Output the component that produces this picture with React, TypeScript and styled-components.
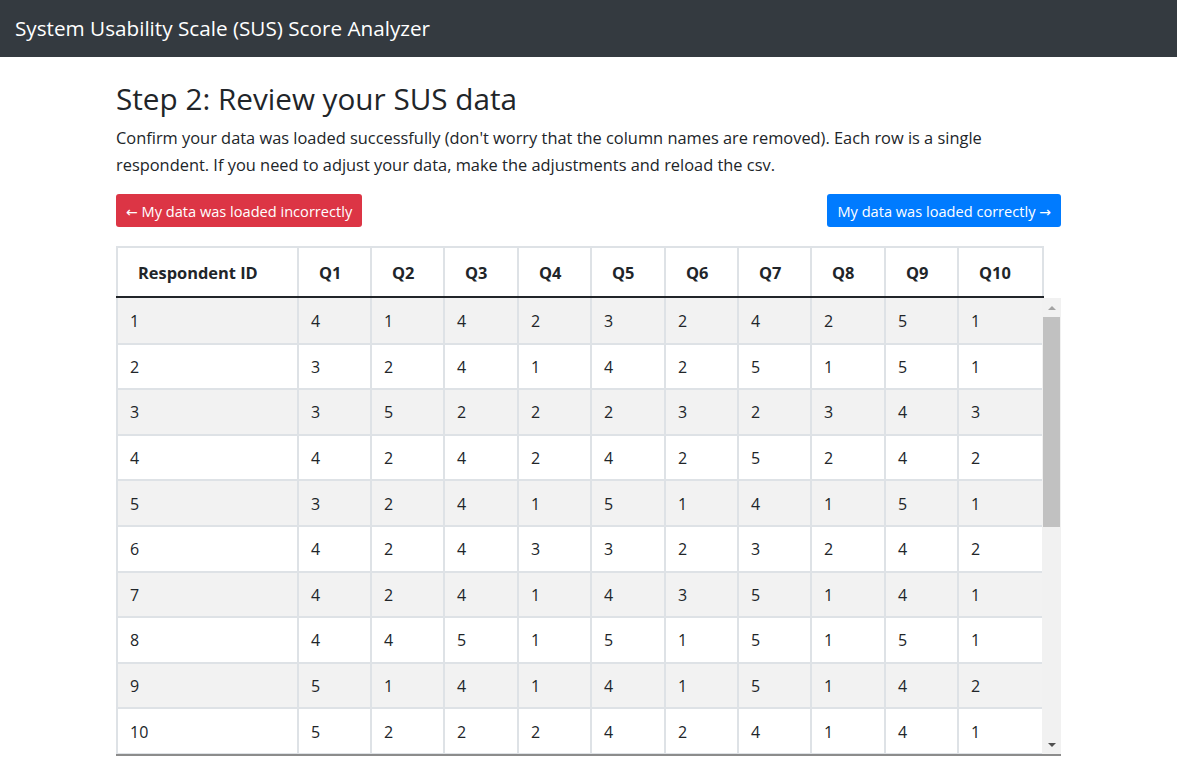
import React from "react";
import styled, { createGlobalStyle } from "styled-components";

const GlobalStyle = createGlobalStyle`
  html, body { margin: 0; padding: 0; background: #fff; }
  body {
    font-family: "Open Sans", "Noto Sans", "Liberation Sans", sans-serif;
    color: #212529;
    -webkit-font-smoothing: antialiased;
  }
  * { box-sizing: border-box; }
`;

const NavBar = styled.header`
  height: 57px;
  background: #343a40;
  display: flex;
  align-items: center;
  padding: 0 15px;
`;

const Brand = styled.div`
  color: #fff;
  font-size: 20.7px;
  line-height: 30px;
  padding-bottom: 1px;
`;

const Main = styled.main`
  width: 945px;
  margin: 0 auto;
  padding-top: 22px;
`;

const Title = styled.h2`
  margin: 0;
  font-size: 29.7px;
  font-weight: 500;
  line-height: 40px;
`;

const Lead = styled.p`
  margin: 5px 0 0;
  font-size: 16.4px;
  line-height: 27px;
`;

const ButtonRow = styled.div`
  display: flex;
  justify-content: space-between;
  margin-top: 16px;
`;

const ActionButton = styled.button<{ $variant: "danger" | "primary" }>`
  height: 33px;
  padding: 0 10px;
  border: none;
  border-radius: 3px;
  font-family: inherit;
  font-size: 14.6px;
  color: #fff;
  background: ${(p) => (p.$variant === "danger" ? "#dc3545" : "#007bff")};
  cursor: pointer;
`;

const Arrow = styled.span`
  font-family: "DejaVu Sans", sans-serif;
  font-size: 14px;
`;

const TableFrame = styled.div`
  margin-top: 19px;
  width: 945px;
  border-bottom: 2px solid #8c8c8c;
`;

const HeadTable = styled.table`
  width: 926px;
  table-layout: fixed;
  border-collapse: collapse;
`;

const BodyArea = styled.div`
  display: flex;
  height: 456px;
`;

const BodyViewport = styled.div`
  width: 926px;
  overflow: hidden;
`;

const ScrollTrack = styled.div`
  width: 19px;
  background: #f1f1f1;
  display: flex;
  flex-direction: column;
  align-items: stretch;
`;

const ScrollButton = styled.div<{ $dir: "up" | "down" }>`
  height: 19px;
  display: flex;
  align-items: center;
  justify-content: center;
  flex: none;
  margin-top: ${(p) => (p.$dir === "down" ? "auto" : "0")};

  &::before {
    content: "";
    width: 0;
    height: 0;
    border-left: 4px solid transparent;
    border-right: 4px solid transparent;
    ${(p) =>
      p.$dir === "up"
        ? "border-bottom: 4px solid #a3a3a3;"
        : "border-top: 4px solid #505050;"}
  }
`;

const ScrollThumb = styled.div`
  height: 210px;
  margin: 0 1px;
  background: #c1c1c1;
  flex: none;
`;

const BodyTable = styled.table`
  width: 926px;
  table-layout: fixed;
  border-collapse: collapse;
`;

const HeadCell = styled.th`
  height: 50px;
  padding: 0 0 0 20px;
  text-align: left;
  font-size: 16.4px;
  font-weight: 700;
  border: 2px solid #dee2e6;
  border-bottom: 2px solid #212529;
`;

const Row = styled.tr<{ $striped: boolean }>`
  background: ${(p) => (p.$striped ? "#f2f2f2" : "#fff")};
`;

const Cell = styled.td`
  height: 45.6px;
  padding: 1px 0 0 12px;
  font-size: 16px;
  border: 2px solid #dee2e6;
  border-top: none;
`;

const columns = ["Respondent ID", "Q1", "Q2", "Q3", "Q4", "Q5", "Q6", "Q7", "Q8", "Q9", "Q10"];
const widths = [181, 73, 73, 74, 73, 74, 73, 73, 74, 73, 85];

const data: number[][] = [
  [4, 1, 4, 2, 3, 2, 4, 2, 5, 1],
  [3, 2, 4, 1, 4, 2, 5, 1, 5, 1],
  [3, 5, 2, 2, 2, 3, 2, 3, 4, 3],
  [4, 2, 4, 2, 4, 2, 5, 2, 4, 2],
  [3, 2, 4, 1, 5, 1, 4, 1, 5, 1],
  [4, 2, 4, 3, 3, 2, 3, 2, 4, 2],
  [4, 2, 4, 1, 4, 3, 5, 1, 4, 1],
  [4, 4, 5, 1, 5, 1, 5, 1, 5, 1],
  [5, 1, 4, 1, 4, 1, 5, 1, 4, 2],
  [5, 2, 2, 2, 4, 2, 4, 1, 4, 1],
];

const Cols = () => (
  <colgroup>
    {widths.map((w, i) => (
      <col key={i} style={{ width: w }} />
    ))}
  </colgroup>
);

export default function App() {
  return (
    <>
      <GlobalStyle />
      <NavBar>
        <Brand>System Usability Scale (SUS) Score Analyzer</Brand>
      </NavBar>
      <Main>
        <Title>Step 2: Review your SUS data</Title>
        <Lead>
          Confirm your data was loaded successfully (don't worry that the column names are removed). Each row is a single
          <br />
          respondent. If you need to adjust your data, make the adjustments and reload the csv.
        </Lead>
        <ButtonRow>
          <ActionButton $variant="danger">
            <Arrow>←</Arrow> My data was loaded incorrectly
          </ActionButton>
          <ActionButton $variant="primary">
            My data was loaded correctly <Arrow>→</Arrow>
          </ActionButton>
        </ButtonRow>
        <TableFrame>
          <HeadTable>
            <Cols />
            <thead>
              <tr>
                {columns.map((c) => (
                  <HeadCell key={c}>{c}</HeadCell>
                ))}
              </tr>
            </thead>
          </HeadTable>
          <BodyArea>
            <BodyViewport>
              <BodyTable>
                <Cols />
                <tbody>
                  {data.map((row, i) => (
                    <Row key={i} $striped={i % 2 === 0}>
                      <Cell>{i + 1}</Cell>
                      {row.map((v, j) => (
                        <Cell key={j}>{v}</Cell>
                      ))}
                    </Row>
                  ))}
                </tbody>
              </BodyTable>
            </BodyViewport>
            <ScrollTrack>
              <ScrollButton $dir="up" />
              <ScrollThumb />
              <ScrollButton $dir="down" />
            </ScrollTrack>
          </BodyArea>
        </TableFrame>
      </Main>
    </>
  );
}
